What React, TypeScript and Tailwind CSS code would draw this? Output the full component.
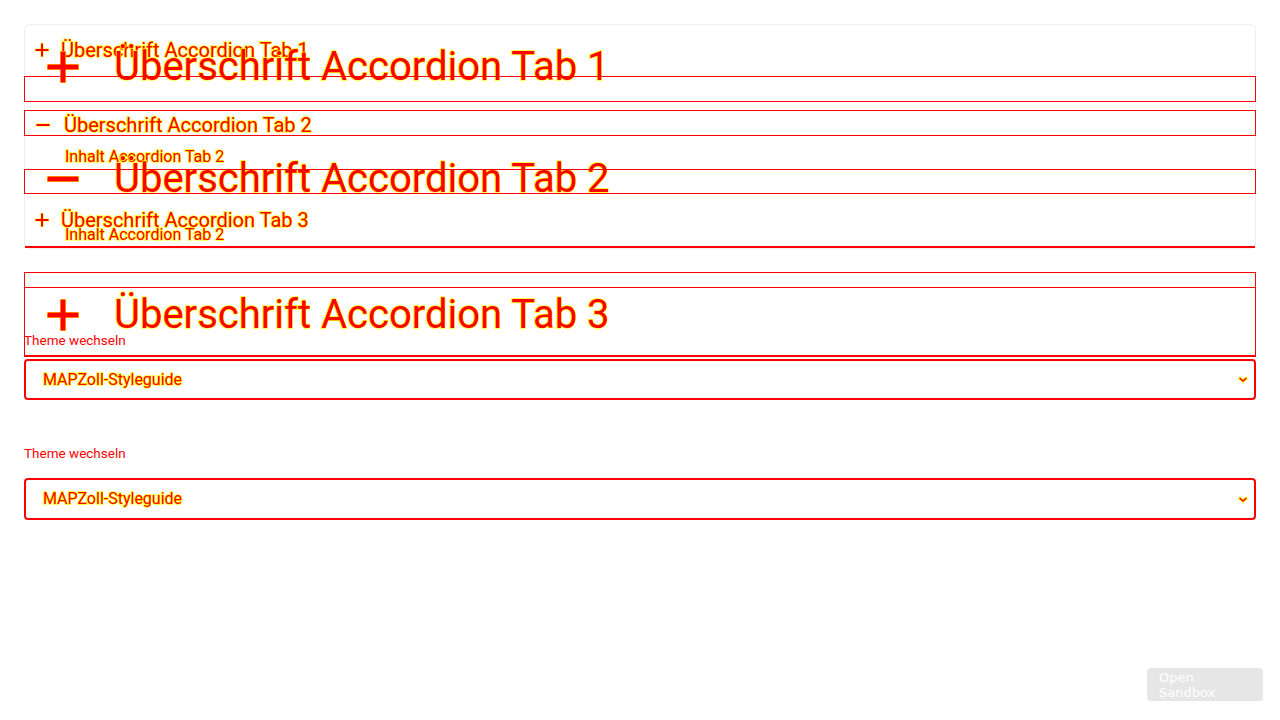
import React from "react";

const hl = "text-[#ff0000] [-webkit-text-stroke:1.5px_#ffff00] [paint-order:stroke_fill]";

function Plus({ size, stroke }: { size: number; stroke: number }) {
  const h = size / 2;
  return (
    <svg width={size} height={size} viewBox={`0 0 ${size} ${size}`} className="shrink-0">
      <path d={`M0 ${h}H${size}M${h} 0V${size}`} stroke="#ffff00" strokeWidth={stroke + 1} />
      <path d={`M0.5 ${h}H${size - 0.5}M${h} 0.5V${size - 0.5}`} stroke="#ff0000" strokeWidth={stroke} />
    </svg>
  );
}

function Minus({ size, stroke }: { size: number; stroke: number }) {
  const h = size / 2;
  return (
    <svg width={size} height={size} viewBox={`0 0 ${size} ${size}`} className="shrink-0">
      <path d={`M0 ${h}H${size}`} stroke="#ffff00" strokeWidth={stroke + 1} />
      <path d={`M0.5 ${h}H${size - 0.5}`} stroke="#ff0000" strokeWidth={stroke} />
    </svg>
  );
}

function Chevron() {
  return (
    <svg width="10" height="7" viewBox="0 0 10 7" className="shrink-0">
      <path d="M1 1.5L5 5L9 1.5" fill="none" stroke="#ffff00" strokeWidth="3" />
      <path d="M1.5 2L5 5L8.5 2" fill="none" stroke="#ff0000" strokeWidth="1.5" />
    </svg>
  );
}

function ThemeSelect({ className }: { className: string }) {
  return (
    <div className={`flex items-center justify-between border-2 border-[#ff0000] rounded-[4px] pl-[17px] pr-[6px] ${className}`}>
      <span className={`${hl} text-[16px]`}>MAPZoll-Styleguide</span>
      <Chevron />
    </div>
  );
}

function BigRow({ icon, title, className }: { icon: React.ReactNode; title: string; className: string }) {
  return (
    <div className={`flex items-center h-[48px] pl-[23px] gap-[35px] ${className}`}>
      {icon}
      <span className={`${hl} text-[40px] leading-[48px] whitespace-nowrap`}>{title}</span>
    </div>
  );
}

export default function App() {
  return (
    <div className="relative w-full h-[720px] bg-white overflow-hidden font-['Roboto',sans-serif]">
      {/* Accordion (inline rendering) */}
      <div className="px-6 pt-6">
        <div className="border border-[#eeeeee] rounded-md">
          <div className="flex items-center h-[50px] pl-[10px] gap-[12px]">
            <Plus size={14} stroke={2} />
            <span className={`${hl} text-[20px] leading-[24px]`}>Überschrift Accordion Tab 1</span>
          </div>
          <div className="mt-[35px] -mx-px h-[26px] border border-[#ff0000] flex items-center pl-[11px] pt-[4px] gap-[14px]">
            <Minus size={14} stroke={2} />
            <span className={`${hl} text-[20px] leading-[22px]`}>Überschrift Accordion Tab 2</span>
          </div>
          <div className="h-[40px] pt-[2px] flex items-center pl-[40px]">
            <span className={`${hl} text-[16px]`}>Inhalt Accordion Tab 2</span>
          </div>
          <div className="border-b-2 border-[#ff0000] pb-[3px]">
            <div className="mt-[29px] h-[30px] flex items-center pl-[10px] gap-[12px]">
              <Plus size={14} stroke={2} />
              <span className={`${hl} text-[20px] leading-[24px]`}>Überschrift Accordion Tab 3</span>
            </div>
            <div className="-mt-[8px] h-[16px] flex items-center pl-[40px]">
              <span className={`${hl} text-[16px]`}>Inhalt Accordion Tab 2</span>
            </div>
          </div>
        </div>
      </div>

      {/* Overlapping block layout */}
      <div className="absolute inset-x-0 top-0 px-6 flex flex-col">
        <BigRow icon={<Plus size={32} stroke={5} />} title="Überschrift Accordion Tab 1" className="mt-[43px]" />
        <div className="-mt-[15px] h-[26px] border border-[#ff0000]" />
        <div className="mt-[8px] h-[26px] border border-[#ff0000]" />
        <BigRow icon={<Minus size={32} stroke={5} />} title="Überschrift Accordion Tab 2" className="mt-[19px]" />
        <div className="-mt-[34px] h-[25px] border border-[#ff0000]" />
        <div className="mt-[78px] h-[15px] border border-b-0 border-[#ff0000]" />
        <div className="h-[70px] border border-b-2 border-[#ff0000]">
          <BigRow icon={<Plus size={32} stroke={5} />} title="Überschrift Accordion Tab 3" className="mt-[3px] -ml-px" />
          <div className="-mt-[7px] -ml-px h-[16px] flex items-center">
            <span className="text-[#ff0000] text-[13.5px]">Theme wechseln</span>
          </div>
        </div>
        <ThemeSelect className="mt-[2px] h-[41px]" />
        <div className="mt-[45px] h-[16px] flex items-center">
          <span className="text-[#ff0000] text-[13.5px]">Theme wechseln</span>
        </div>
        <ThemeSelect className="mt-[17px] h-[42px]" />
      </div>

      <button className="absolute right-[17px] bottom-[19px] w-[116px] h-[33px] rounded-[4px] bg-[#e6e6e6] text-white text-left pl-[12px] text-[13px] leading-[15px] font-['DejaVu_Sans',sans-serif]">
        Open<br />Sandbox
      </button>
    </div>
  );
}
